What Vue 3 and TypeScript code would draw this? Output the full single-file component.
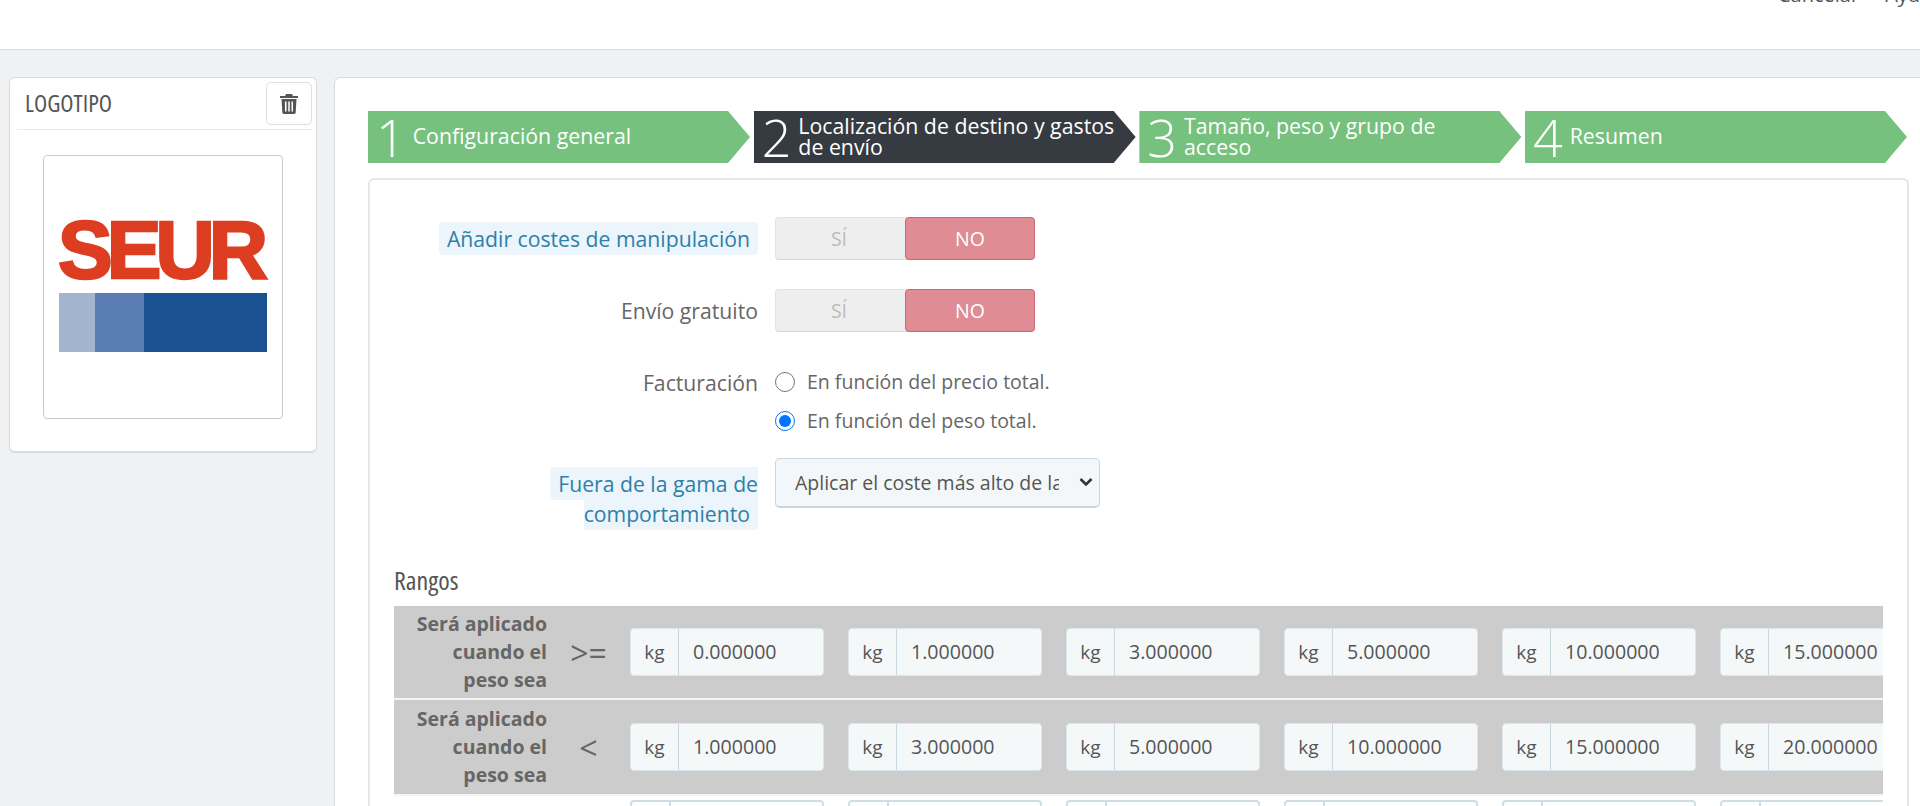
<template>
  <div class="page">
    <header class="topbar">
      <a class="top-link">Cancelar</a>
      <a class="top-link">Ayuda</a>
    </header>

    <div class="content">
      <aside class="logo-panel">
        <div class="logo-head">
          <span class="logo-title">LOGOTIPO</span>
          <button class="trash-btn" type="button" aria-label="Eliminar">
            <svg width="18" height="20" viewBox="0 0 18 20">
              <path fill="#555" d="M6 0h6l1 2h5v2H0V2h5zM1.500 5h15l-.8 13.500A1.600 1.600 0 0 1 14 20H4a1.600 1.600 0 0 1-1.700-1.500z" />
              <path fill="#fff" d="M5 7.500h1.500V17.500H5zM8.250 7.500h1.500V17.500h-1.500zM11.500 7.500H13V17.500h-1.500z" />
            </svg>
          </button>
        </div>
        <div class="logo-box">
          <div class="seur-word">SEUR</div>
          <div class="seur-bars">
            <span class="bar bar-light" />
            <span class="bar bar-mid" />
            <span class="bar bar-dark" />
          </div>
        </div>
      </aside>

      <main class="main-panel">
        <ol class="steps">
          <li v-for="(s, i) in steps" :key="s" class="step" :class="{ current: i === 1 }">
            <span class="step-num">{{ i + 1 }}</span>
            <span class="step-label">{{ s }}</span>
          </li>
        </ol>

        <section class="form-card">
          <div class="form-row toggle-row">
            <div class="form-label"><span class="hint">Añadir costes de manipulación</span></div>
            <div class="toggle"><span class="yes">SÍ</span><span class="no">NO</span></div>
          </div>
          <div class="form-row toggle-row second">
            <div class="form-label">Envío gratuito</div>
            <div class="toggle"><span class="yes">SÍ</span><span class="no">NO</span></div>
          </div>
          <div class="form-row radio-row">
            <div class="form-label plain">Facturación</div>
            <div class="radios">
              <label class="radio"><input type="radio" name="billing" />En función del precio total.</label>
              <label class="radio"><input type="radio" name="billing" checked />En función del peso total.</label>
            </div>
          </div>
          <div class="form-row select-row">
            <div class="form-label multi"><span class="hint">Fuera de la gama de comportamiento</span></div>
            <div class="select-wrap">
              <select class="select">
                <option>Aplicar el coste más alto de la franja definida</option>
              </select>
              <svg class="chevron" width="14" height="10" viewBox="0 0 14 10">
                <path d="M1.500 2l5.500 5.500L12.500 2" fill="none" stroke="#333" stroke-width="2.600" />
              </svg>
            </div>
          </div>

          <h4 class="ranges-title">Rangos</h4>
          <div class="ranges">
            <div v-for="row in rows" :key="row.symbol" class="rate-row" :class="row.cls">
              <div class="rate-label">Será aplicado cuando el peso sea</div>
              <div class="rate-symbol">{{ row.symbol }}</div>
              <div v-for="v in row.values" :key="v" class="rate-input">
                <span class="unit">kg</span>
                <span class="value">{{ v }}</span>
              </div>
            </div>
            <div class="rate-row blank">
              <div class="rate-label" />
              <div class="rate-symbol" />
              <div v-for="n in 6" :key="n" class="rate-input">
                <span class="unit" />
                <span class="value" />
              </div>
            </div>
          </div>
        </section>
      </main>
    </div>
  </div>
</template>

<script setup lang="ts">
const steps: string[] = [
  'Configuración general',
  'Localización de destino y gastos de envío',
  'Tamaño, peso y grupo de acceso',
  'Resumen'
]

const rows = [
  { symbol: '>=', cls: 'first', values: ['0.000000', '1.000000', '3.000000', '5.000000', '10.000000', '15.000000'] },
  { symbol: '<', cls: 'second', values: ['1.000000', '3.000000', '5.000000', '10.000000', '15.000000', '20.000000'] }
]
</script>

<style>
html,
body {
  margin: 0;
  background: #eff1f2;
  overflow: hidden;
}
</style>

<style scoped>
.page {
  height: 806px;
  overflow: hidden;
  font-family: "Open Sans", "Liberation Sans", sans-serif;
  font-size: 21.200px;
  color: #666;
  background: #eff1f2;
}

.topbar {
  display: flex;
  gap: 26px;
  height: 49px;
  padding-left: 1778px;
  background: #fff;
  border-bottom: 1px solid #d9dcde;
  white-space: nowrap;
  overflow: hidden;
}

.top-link {
  margin-top: -20px;
  line-height: 30px;
  font-size: 20px;
  color: #555;
}

.content {
  display: flex;
  gap: 17px;
  padding: 27px 0 0 9px;
}

/* logo */
.logo-panel {
  flex: none;
  box-sizing: border-box;
  width: 308px;
  height: 376px;
  padding: 4px 4px 0 7px;
  background: #fff;
  border: 1px solid #d8dbdd;
  border-bottom-width: 2px;
  border-radius: 6px;
}

.logo-head {
  display: flex;
  align-items: center;
  justify-content: space-between;
  height: 47px;
  padding-left: 8px;
  border-bottom: 1px solid #e8eaeb;
}

.logo-title {
  margin-top: -6px;
  font-size: 24.300px;
  font-stretch: 75%;
  color: #555;
}

.trash-btn {
  display: flex;
  align-items: center;
  justify-content: center;
  width: 46px;
  height: 43px;
  margin-top: -4px;
  padding: 0;
  background: #fff;
  border: 1px solid #dcdfe1;
  border-radius: 5px;
}

.logo-box {
  display: flex;
  flex-direction: column;
  align-items: center;
  box-sizing: border-box;
  width: 240px;
  height: 264px;
  margin: 25px 0 0 26px;
  padding-top: 63px;
  border: 1px solid #c8cbcd;
  border-radius: 4px;
}

.seur-word {
  font-family: "Liberation Sans", sans-serif;
  font-weight: 700;
  font-size: 82px;
  line-height: 62px;
  letter-spacing: -6px;
  margin-left: -6px;
  color: #dd3d20;
  -webkit-text-stroke: 2.500px #dd3d20;
}

.seur-bars {
  display: flex;
  width: 208px;
  height: 59px;
  margin-top: 12px;
}

.bar-light { width: 36px; background: #a3b4cf; }
.bar-mid { width: 49px; background: #5a7eb3; }
.bar-dark { flex: 1; background: #1a5191; }

/* main */
.main-panel {
  flex: 1;
  min-width: 0;
  box-sizing: border-box;
  height: 740px;
  padding: 33px 11px 0 33px;
  background: #fff;
  border-top: 1px solid #d8dbdd;
  border-left: 1px solid #d8dbdd;
  border-top-left-radius: 6px;
}

.steps {
  display: flex;
  gap: 3.700px;
  height: 52px;
  margin: 0 2px 0 0;
  padding: 0;
  list-style: none;
}

.step {
  display: flex;
  align-items: center;
  flex: 1;
  min-width: 0;
  padding: 0 20px 0 8px;
  color: #fff;
  background: #76c17d;
  clip-path: polygon(0 0, calc(100% - 22px) 0, 100% 50%, calc(100% - 22px) 100%, 0 100%);
}

.step.current {
  background: #363a41;
}

.step-num {
  flex: none;
  margin-right: 7px;
  font-size: 52px;
  font-weight: 350;
  line-height: 52px;
}

.step-label {
  margin-top: -3px;
  font-size: 21.300px;
  line-height: 21px;
}

.form-card {
  box-sizing: border-box;
  height: 640px;
  margin-top: 15px;
  padding: 37px 22px 0 24px;
  border: 2px solid #e5e7e8;
  border-bottom: 0;
  border-radius: 6px 6px 0 0;
}

.form-row {
  display: flex;
  gap: 17px;
  margin-left: -24px;
}

.form-label {
  flex: none;
  width: 388px;
  text-align: right;
}

.hint {
  padding: 2px 8px;
  color: #2f80a8;
  background: #ebf5fb;
  border-radius: 4px;
}

.toggle-row {
  align-items: center;
  height: 43px;
}

.toggle-row.second {
  margin-top: 29px;
}

.toggle {
  display: flex;
  box-sizing: border-box;
  width: 260px;
  height: 43px;
  background: #eee;
  border: 1px solid #e3e3e3;
  border-bottom-color: #d8d8d8;
  border-radius: 4px;
}

.yes,
.no {
  display: flex;
  align-items: center;
  justify-content: center;
  font-size: 19.500px;
}

.yes {
  box-sizing: border-box;
  width: 130px;
  padding-right: 4px;
  color: #bdbdbd;
}

.no {
  flex: 1;
  margin: -1px;
  color: #fff;
  background: #df8c95;
  border: 1px solid #cf6570;
  border-radius: 4px;
}

.radio-row {
  margin-top: 30px;
}

.form-label.plain {
  padding-top: 6px;
}

.radios {
  display: flex;
  flex-direction: column;
}

.radio {
  display: flex;
  align-items: center;
  gap: 12px;
  height: 39px;
  font-size: 19.500px;
}

.radio input {
  width: 20px;
  height: 20px;
  margin: 0;
}

.select-row {
  margin-top: 18px;
}

.form-label.multi {
  box-sizing: border-box;
  padding: 11px 0 0 60px;
  line-height: 30px;
}

.form-label.multi .hint {
  padding: 2px 8px;
}

.select-wrap {
  position: relative;
  width: 325px;
  height: 50px;
}

.select {
  display: block;
  box-sizing: border-box;
  width: 100%;
  height: 100%;
  padding: 0 40px 0 19px;
  font: inherit;
  font-size: 19.500px;
  color: #555;
  background: #f3f7f9;
  border: 1px solid #c9d6de;
  border-bottom-width: 2px;
  border-radius: 5px;
  appearance: none;
}

.chevron {
  position: absolute;
  top: 19px;
  right: 7px;
}

.ranges-title {
  height: 30px;
  margin: 36px 0 11px;
  font-size: 26px;
  font-weight: 400;
  font-stretch: 75%;
  line-height: 30px;
  color: #555;
}

.ranges {
  margin-right: 2px;
  overflow: hidden;
}

.rate-row {
  display: flex;
  align-items: center;
  box-sizing: border-box;
  height: 94px;
  background: #ccc;
  border-bottom: 2px solid #f2f4f5;
}

.rate-row.second {
  height: 96px;
}

.rate-row.blank {
  align-items: flex-start;
  padding-top: 4px;
  background: #fff;
  border: 0;
}

.rate-label {
  flex: none;
  box-sizing: border-box;
  width: 153px;
  padding-left: 14px;
  font-size: 19.500px;
  font-weight: 700;
  line-height: 27.800px;
  text-align: right;
  color: #666;
}

.rate-symbol {
  flex: none;
  width: 83px;
  font-size: 32px;
  text-align: center;
}

.rate-input {
  flex: none;
  display: flex;
  box-sizing: border-box;
  width: 194px;
  height: 48px;
  margin-right: 24px;
  background: #f5f8f9;
  border: 1px solid #dbe6ec;
  border-radius: 4px;
  font-size: 19.600px;
  line-height: 46px;
  color: #555;
}

.unit {
  flex: none;
  box-sizing: border-box;
  width: 48px;
  font-size: 19px;
  text-align: center;
  border-right: 1px solid #c8d8df;
}

.value {
  padding-left: 14px;
  white-space: nowrap;
}

.blank .rate-input {
  background: #fff;
  border: 2px solid #cfdde5;
}

.blank .unit {
  width: 39px;
  border-right-width: 2px;
  border-right-color: #cfdde5;
}
</style>
